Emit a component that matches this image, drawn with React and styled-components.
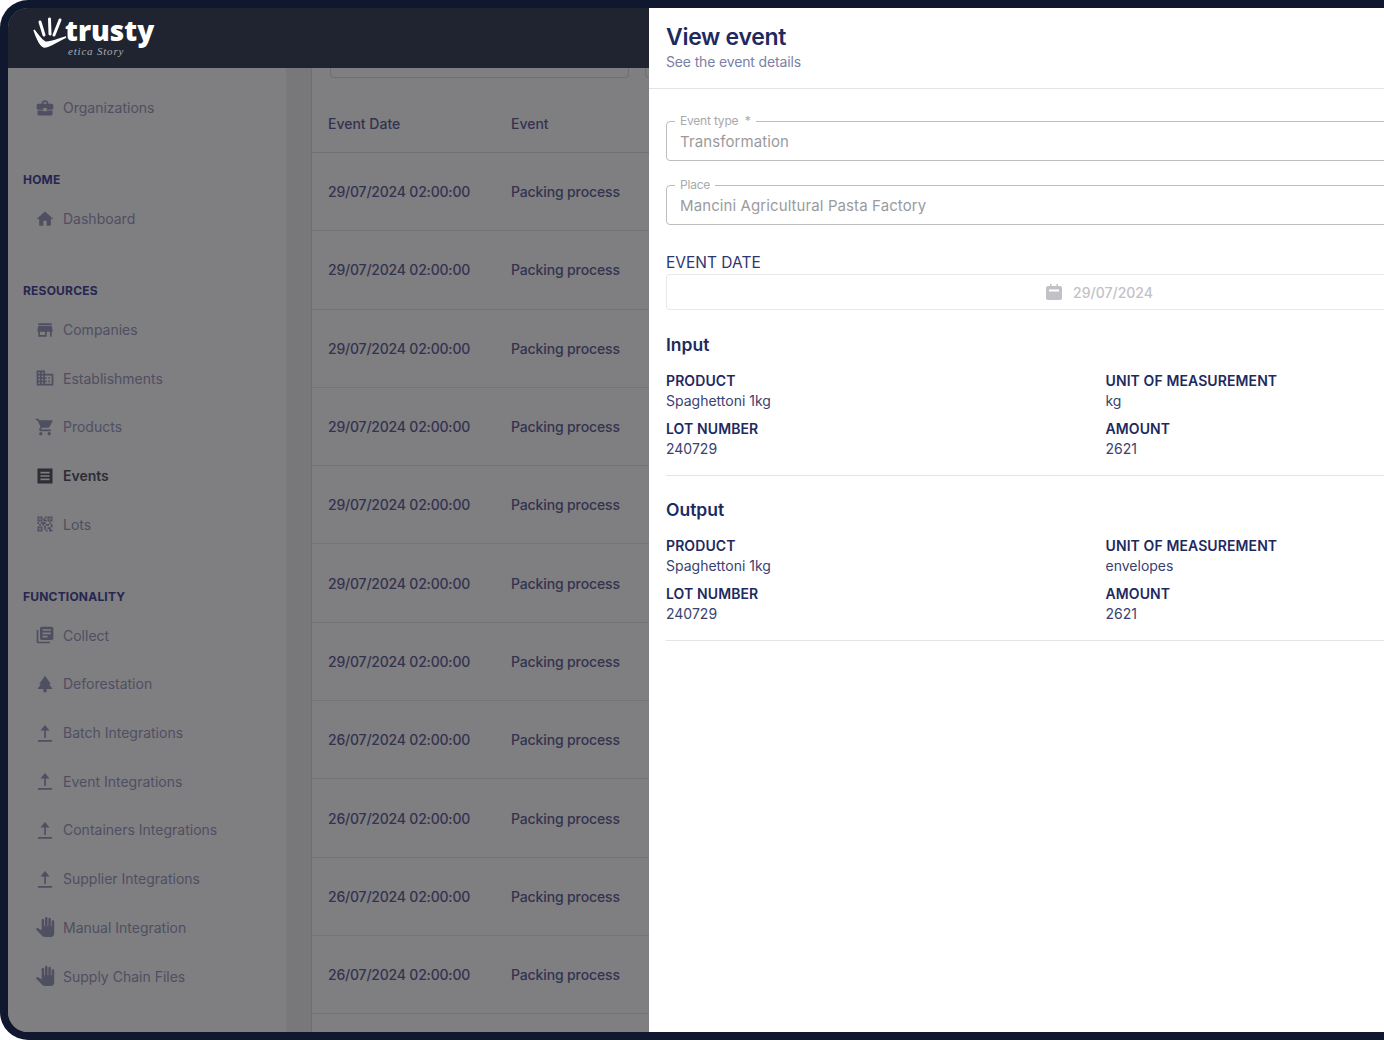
import React from "react";
import styled, { createGlobalStyle } from "styled-components";
import {
  MdBusinessCenter,
  MdHome,
  MdStore,
  MdDomain,
  MdShoppingCart,
  MdQrCode2,
  MdLibraryBooks,
  MdPark,
  MdPanTool,
} from "react-icons/md";

const EventsIcon = () => (
  <svg viewBox="0 0 24 24" fill="currentColor">
    <path d="M3 3h18v18H3V3zm3.5 4v2h11V7h-11zm0 4v2h11v-2h-11zm0 4v2h11v-2h-11z" fillRule="evenodd" />
  </svg>
);

const UploadIcon = () => (
  <svg viewBox="0 0 24 24" fill="currentColor">
    <path d="M12 2.500L6.500 9H11v9h2V9h4.500L12 2.500zM3.500 20.500h17v2h-17z" />
  </svg>
);

const CalendarIcon = () => (
  <svg viewBox="0 0 16 16" width="16" height="16" fill="#c2c1c6">
    <path
      d="M4 0h1.500v2h5V0H12v2h2a2 2 0 0 1 2 2v10a2 2 0 0 1-2 2H2a2 2 0 0 1-2-2V4a2 2 0 0 1 2-2h2V0zM3 5.500V7.500h10V5.500H3z"
      fillRule="evenodd"
    />
  </svg>
);

const HandLogo = () => (
  <svg viewBox="0 0 36 34" width="36" height="34" fill="none" stroke="#fff" strokeLinecap="round">
    <path d="M2 13C5 22 8 29 12 30C18 30 25 24 34 20C26 22 18 26 13 25C9 23 6 18 2 13Z" fill="#fff" strokeWidth="1.400" />
    <path d="M8 5L12 18" strokeWidth="3" />
    <path d="M17.500 2L18 17" strokeWidth="3" />
    <path d="M28 3L22 18" strokeWidth="3" />
  </svg>
);

const sections = [
  {
    title: "HOME",
    items: [{ label: "Dashboard", icon: <MdHome /> }],
  },
  {
    title: "RESOURCES",
    items: [
      { label: "Companies", icon: <MdStore /> },
      { label: "Establishments", icon: <MdDomain /> },
      { label: "Products", icon: <MdShoppingCart /> },
      { label: "Events", icon: <EventsIcon />, active: true },
      { label: "Lots", icon: <MdQrCode2 /> },
    ],
  },
  {
    title: "FUNCTIONALITY",
    items: [
      { label: "Collect", icon: <MdLibraryBooks /> },
      { label: "Deforestation", icon: <MdPark /> },
      { label: "Batch Integrations", icon: <UploadIcon /> },
      { label: "Event Integrations", icon: <UploadIcon /> },
      { label: "Containers Integrations", icon: <UploadIcon /> },
      { label: "Supplier Integrations", icon: <UploadIcon /> },
      { label: "Manual Integration", icon: <MdPanTool /> },
      { label: "Supply Chain Files", icon: <MdPanTool /> },
    ],
  },
];

const rows = [
  "29/07/2024 02:00:00",
  "29/07/2024 02:00:00",
  "29/07/2024 02:00:00",
  "29/07/2024 02:00:00",
  "29/07/2024 02:00:00",
  "29/07/2024 02:00:00",
  "29/07/2024 02:00:00",
  "26/07/2024 02:00:00",
  "26/07/2024 02:00:00",
  "26/07/2024 02:00:00",
  "26/07/2024 02:00:00",
];

const details = [
  { title: "Input", unit: "kg" },
  { title: "Output", unit: "envelopes" },
];

const App = () => {
  return (
    <>
      <GlobalStyle />
      <Frame>
        <Screen>
          <TopBar>
            <Logo>
              <HandLogo />
              <LogoText>
                <LogoName>trusty</LogoName>
                <LogoTag>etica Story</LogoTag>
              </LogoText>
            </Logo>
          </TopBar>
          <Main>
            <Sidebar>
              <NavItem>
                <NavIcon>
                  <MdBusinessCenter />
                </NavIcon>
                Organizations
              </NavItem>
              {sections.map((section) => (
                <NavSection key={section.title}>
                  <SectionTitle>{section.title}</SectionTitle>
                  {section.items.map((item) => (
                    <NavItem key={item.label} $active={item.active}>
                      <NavIcon>{item.icon}</NavIcon>
                      {item.label}
                    </NavItem>
                  ))}
                </NavSection>
              ))}
            </Sidebar>
            <Gutter />
            <Content>
              <Filters>
                <FilterBox />
                <FilterBox />
              </Filters>
              <HeadRow>
                <HeadCell>Event Date</HeadCell>
                <div>Event</div>
              </HeadRow>
              {rows.map((date, i) => (
                <Row key={i}>
                  <DateCell>{date}</DateCell>
                  <EventCell>Packing process</EventCell>
                </Row>
              ))}
            </Content>
          </Main>
          <Drawer>
            <DrawerHeader>
              <Title>View event</Title>
              <Subtitle>See the event details</Subtitle>
            </DrawerHeader>
            <DrawerBody>
              <Field>
                <legend>Event type &nbsp;*</legend>
                <FieldValue>Transformation</FieldValue>
              </Field>
              <Field>
                <legend>Place</legend>
                <FieldValue>Mancini Agricultural Pasta Factory</FieldValue>
              </Field>
              <DateLabel>EVENT DATE</DateLabel>
              <DateInput>
                <CalendarIcon />
                29/07/2024
              </DateInput>
              {details.map((block) => (
                <Block key={block.title}>
                  <BlockTitle>{block.title}</BlockTitle>
                  <BlockGrid>
                    <div>
                      <DetailLabel>PRODUCT</DetailLabel>
                      <DetailValue>Spaghettoni 1kg</DetailValue>
                    </div>
                    <div>
                      <DetailLabel>UNIT OF MEASUREMENT</DetailLabel>
                      <DetailValue>{block.unit}</DetailValue>
                    </div>
                    <div>
                      <DetailLabel>LOT NUMBER</DetailLabel>
                      <DetailValue>240729</DetailValue>
                    </div>
                    <div>
                      <DetailLabel>AMOUNT</DetailLabel>
                      <DetailValue>2621</DetailValue>
                    </div>
                  </BlockGrid>
                </Block>
              ))}
            </DrawerBody>
          </Drawer>
        </Screen>
      </Frame>
    </>
  );
};

const GlobalStyle = createGlobalStyle`
  html, body {
    margin: 0;
    background: #fff;
    font-family: Inter, "Liberation Sans", sans-serif;
  }
  * {
    box-sizing: border-box;
  }
`;

const Frame = styled.div`
  width: 1384px;
  height: 1040px;
  padding: 8px 0 8px 8px;
  background: #10182f;
  border-radius: 28px 0 0 28px;
  overflow: hidden;
`;

const Screen = styled.div`
  position: relative;
  display: flex;
  flex-direction: column;
  height: 100%;
  border-radius: 20px 0 0 20px;
  overflow: hidden;
  background: #7f7e81;
`;

const TopBar = styled.header`
  flex: 0 0 60px;
  display: flex;
  align-items: flex-start;
  padding: 9px 0 0 24px;
  background: #1f2430;
`;

const Logo = styled.div`
  display: flex;
  align-items: flex-start;
`;

const LogoText = styled.div`
  display: flex;
  flex-direction: column;
  margin-left: -3px;
`;

const LogoName = styled.div`
  font-family: "Open Sans", sans-serif;
  font-size: 28px;
  font-weight: 800;
  line-height: 27px;
  color: #fff;
`;

const LogoTag = styled.div`
  margin: 2px 0 0 3px;
  font-family: "Liberation Serif", serif;
  font-size: 11px;
  font-style: italic;
  line-height: 11px;
  letter-spacing: 0.8px;
  color: #a9abb2;
`;

const Main = styled.div`
  flex: 1;
  display: flex;
  min-height: 0;
`;

const Sidebar = styled.nav`
  flex: 0 0 279px;
  padding-top: 15.5px;
  border-right: 1px solid #79787b;
  background: #7f7e81;
`;

const NavSection = styled.section`
  margin-top: 33.2px;
`;

const SectionTitle = styled.div`
  height: 29px;
  padding-left: 15px;
  font-size: 12px;
  font-weight: 700;
  line-height: 30px;
  letter-spacing: 0.2px;
  color: #262650;
`;

const NavItem = styled.div`
  display: flex;
  align-items: center;
  gap: 8px;
  height: 48.7px;
  padding-left: 27px;
  font-size: 14px;
  font-weight: ${(props) => (props.$active ? 600 : 400)};
  color: ${(props) => (props.$active ? "#2d2d36" : "#4f4f62")};
`;

const NavIcon = styled.span`
  display: flex;
  width: 20px;
  height: 20px;
  svg {
    width: 20px;
    height: 20px;
  }
`;

const Gutter = styled.div`
  flex: 0 0 25px;
  border-right: 1px solid #6f6e72;
  background: #78777a;
`;

const Content = styled.main`
  flex: 1;
  min-width: 0;
  overflow: hidden;
  font-size: 14px;
  font-weight: 500;
  color: #33334f;
`;

const Filters = styled.div`
  display: flex;
  gap: 16px;
  padding-left: 18px;
`;

const FilterBox = styled.div`
  flex: 0 0 299px;
  height: 10px;
  border: 1px solid #6f6e72;
  border-top: none;
  border-radius: 0 0 4px 4px;
`;

const HeadRow = styled.div`
  display: flex;
  align-items: center;
  height: 56px;
  margin-top: 19px;
  padding: 0 0 2px 16px;
  border-bottom: 1px solid #6f6e72;
`;

const Row = styled.div`
  display: flex;
  align-items: center;
  height: 78.3px;
  padding-left: 16px;
  border-bottom: 1px solid #747377;
`;

const HeadCell = styled.div`
  flex: 0 0 183px;
`;

const DateCell = styled.div`
  flex: 0 0 183px;
  letter-spacing: -0.2px;
`;

const EventCell = styled.div`
  letter-spacing: -0.13px;
`;

const Drawer = styled.aside`
  position: absolute;
  top: 0;
  bottom: 0;
  left: 641px;
  width: 900px;
  background: #fff;
  color: #1e2a5e;
`;

const DrawerHeader = styled.div`
  height: 81px;
  padding: 14px 17px 0;
  border-bottom: 1px solid #e4e4e6;
`;

const Title = styled.h2`
  margin: 0;
  font-size: 23px;
  font-weight: 600;
  line-height: 30px;
  letter-spacing: -0.3px;
  color: #1e2a5e;
`;

const Subtitle = styled.div`
  font-size: 14px;
  line-height: 20px;
  letter-spacing: -0.15px;
  color: #7b7fa5;
`;

const DrawerBody = styled.div`
  padding: 26px 16px 0 17px;
`;

const Field = styled.fieldset`
  margin: 0 0 18px;
  padding: 0 13px;
  height: 46px;
  border: 1px solid #bdbdbf;
  border-radius: 4px;
  legend {
    margin-left: -5px;
    padding: 0 5px;
    font-size: 12px;
    line-height: 12px;
    letter-spacing: -0.2px;
    color: #a9a9ab;
  }
`;

const FieldValue = styled.div`
  font-size: 15px;
  line-height: 30px;
  letter-spacing: 0.1px;
  color: #9b9b9d;
`;

const DateLabel = styled.div`
  margin-top: 27px;
  font-size: 15.5px;
  line-height: 22px;
  color: #2f3570;
`;

const DateInput = styled.div`
  display: flex;
  align-items: center;
  justify-content: center;
  gap: 11px;
  height: 36px;
  border: 1px solid #e8e8ea;
  border-radius: 4px;
  font-size: 14px;
  font-weight: 500;
  color: #c2c1c6;
`;

const Block = styled.section`
  margin-top: 23px;
  padding-bottom: 16px;
  border-bottom: 1px solid #e4e4e6;
  & + & {
    margin-top: 22px;
  }
`;

const BlockTitle = styled.h3`
  margin: 0 0 14px;
  font-size: 17.5px;
  font-weight: 600;
  line-height: 24px;
  color: #1e2a5e;
`;

const BlockGrid = styled.div`
  display: grid;
  grid-template-columns: 1fr 1fr;
  gap: 8px 12px;
`;

const DetailLabel = styled.div`
  font-size: 14px;
  font-weight: 600;
  line-height: 20px;
  letter-spacing: 0.1px;
  color: #1e2a5e;
`;

const DetailValue = styled.div`
  font-size: 14px;
  line-height: 20px;
  color: #3a4270;
`;

export default App;
